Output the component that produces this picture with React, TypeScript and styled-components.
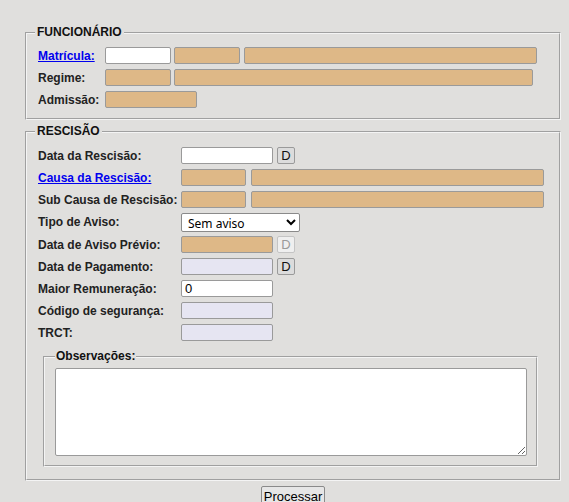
import React from "react"
import styled, { createGlobalStyle } from "styled-components"

const GlobalStyle = createGlobalStyle`
    body {
        margin: 0;
        background: #e0dfdd;
        font-family: "Liberation Sans", Arial, sans-serif;
        font-size: 12px;
        color: #222;
    }
`

type Tone = "white" | "tan" | "lilac"

const tones: Record<Tone, string> = {
    white: "#ffffff",
    tan: "#deb887",
    lilac: "#e6e5f2",
}

export default function App() {
    return (
        <>
            <GlobalStyle />
            <SPage>
                <SFieldset $top={25} $bottom={10} $padTop={7}>
                    <SLegend>FUNCIONÁRIO</SLegend>
                    <SRows>
                        <SRow>
                            <SLabel $w={67}>
                                <SLink href="#">Matrícula:</SLink>
                            </SLabel>
                            <SInput $w={66} $tone="white" />
                            <SInput $w={66} $tone="tan" $ml={3} readOnly />
                            <SInput $w={293} $tone="tan" $ml={4} readOnly />
                        </SRow>
                        <SRow>
                            <SLabel $w={67}>Regime:</SLabel>
                            <SInput $w={66} $tone="tan" readOnly />
                            <SInput $w={359} $tone="tan" $ml={3} readOnly />
                        </SRow>
                        <SRow>
                            <SLabel $w={67}>Admissão:</SLabel>
                            <SInput $w={92} $tone="tan" readOnly />
                        </SRow>
                    </SRows>
                </SFieldset>

                <SFieldset $top={4} $bottom={12} $padTop={8}>
                    <SLegend>RESCISÃO</SLegend>
                    <SRows>
                        <SRow>
                            <SLabel $w={143}>Data da Rescisão:</SLabel>
                            <SInput $w={92} $tone="white" />
                            <SDateButton>D</SDateButton>
                        </SRow>
                        <SRow>
                            <SLabel $w={143}>
                                <SLink href="#">Causa da Rescisão:</SLink>
                            </SLabel>
                            <SInput $w={65} $tone="tan" readOnly />
                            <SInput $w={293} $tone="tan" $ml={5} readOnly />
                        </SRow>
                        <SRow>
                            <SLabel $w={143}>Sub Causa de Rescisão:</SLabel>
                            <SInput $w={65} $tone="tan" readOnly />
                            <SInput $w={293} $tone="tan" $ml={5} readOnly />
                        </SRow>
                        <SRow $h={18}>
                            <SLabel $w={143}>Tipo de Aviso:</SLabel>
                            <SSelect defaultValue="sem">
                                <option value="sem">Sem aviso</option>
                                <option value="trab">Trabalhado</option>
                                <option value="ind">Indenizado</option>
                            </SSelect>
                        </SRow>
                        <SRow>
                            <SLabel $w={143}>Data de Aviso Prévio:</SLabel>
                            <SInput $w={92} $tone="tan" readOnly />
                            <SDateButton disabled>D</SDateButton>
                        </SRow>
                        <SRow>
                            <SLabel $w={143}>Data de Pagamento:</SLabel>
                            <SInput $w={92} $tone="lilac" readOnly />
                            <SDateButton>D</SDateButton>
                        </SRow>
                        <SRow>
                            <SLabel $w={143}>Maior Remuneração:</SLabel>
                            <SInput $w={92} $tone="white" defaultValue="0" />
                        </SRow>
                        <SRow>
                            <SLabel $w={143}>Código de segurança:</SLabel>
                            <SInput $w={92} $tone="lilac" readOnly />
                        </SRow>
                        <SRow>
                            <SLabel $w={143}>TRCT:</SLabel>
                            <SInput $w={92} $tone="lilac" readOnly />
                        </SRow>
                    </SRows>

                    <SObsFieldset>
                        <SObsLegend>Observações:</SObsLegend>
                        <STextArea />
                    </SObsFieldset>
                </SFieldset>

                <SActions>
                    <SSubmit>Processar</SSubmit>
                </SActions>
            </SPage>
        </>
    )
}

const SPage = styled.div`
    padding-left: 25px;
    width: 536px;
`

const SFieldset = styled.fieldset<{ $top: number; $bottom: number; $padTop: number }>`
    box-sizing: border-box;
    width: 536px;
    margin: ${(p) => p.$top}px 0 0 0;
    padding: ${(p) => p.$padTop}px 11px ${(p) => p.$bottom}px 11px;
    border: 2px groove #f4f4f4;
    min-width: 0;
`

const SLegend = styled.legend`
    padding: 0 2px;
    margin-left: -3px;
    font-weight: bold;
    font-size: 12px;
    line-height: 15px;
    color: #111;
`

const SRows = styled.div`
    display: flex;
    flex-direction: column;
    gap: 5px;
`

const SRow = styled.div<{ $h?: number }>`
    display: flex;
    align-items: center;
    height: ${(p) => p.$h ?? 17}px;
`

const SLabel = styled.div<{ $w: number }>`
    flex: 0 0 ${(p) => p.$w}px;
    font-weight: bold;
    font-size: 12px;
    white-space: nowrap;
    color: #222;
`

const SLink = styled.a`
    color: #0000ee;
    text-decoration: underline;
`

const SInput = styled.input<{ $w: number; $tone: Tone; $ml?: number }>`
    box-sizing: border-box;
    width: ${(p) => p.$w}px;
    height: 17px;
    margin: 0 0 0 ${(p) => p.$ml ?? 0}px;
    padding: 0 3px;
    border: 1px solid #9a9a9a;
    border-radius: 2px;
    background: ${(p) => tones[p.$tone]};
    font-family: "Liberation Sans", Arial, sans-serif;
    font-size: 13px;
    color: #000;
    outline: none;
`

const SDateButton = styled.button`
    box-sizing: border-box;
    width: 18px;
    height: 17px;
    margin-left: 4px;
    padding: 0;
    border: 1px solid #9a9a9a;
    border-radius: 2px;
    background: #dcdcdc;
    font-family: "Liberation Sans", Arial, sans-serif;
    font-size: 13px;
    line-height: 15px;
    color: #111;

    &:disabled {
        background: #efefef;
        border-color: #c4c4c4;
        color: #9a9a9a;
    }
`

const SSelect = styled.select`
    box-sizing: border-box;
    width: 119px;
    height: 19px;
    margin: 0;
    padding: 0 2px;
    border: 1px solid #8a8a8a;
    border-radius: 2px;
    background: #fff;
    font-family: "Noto Sans", "DejaVu Sans", sans-serif;
    font-size: 12px;
    color: #000;
`

const SObsFieldset = styled.fieldset`
    box-sizing: border-box;
    width: 495px;
    margin: 8px 0 0 5px;
    padding: 4px 9px 9px 10px;
    border: 2px groove #f4f4f4;
    min-width: 0;
`

const SObsLegend = styled.legend`
    padding: 0 1px;
    font-weight: bold;
    font-size: 12px;
    line-height: 15px;
    color: #111;
`

const STextArea = styled.textarea`
    display: block;
    box-sizing: border-box;
    width: 472px;
    height: 88px;
    margin: 0;
    border: 1px solid #9a9a9a;
    border-radius: 2px;
    background: #fff;
`

const SActions = styled.div`
    display: flex;
    justify-content: center;
    margin-top: 5px;
`

const SSubmit = styled.button`
    box-sizing: border-box;
    height: 20px;
    padding: 0 2px;
    border: 1px solid #8a8a8a;
    border-radius: 2px;
    background: #e6e6e6;
    font-family: "Liberation Sans", Arial, sans-serif;
    font-size: 13px;
    color: #000;
`
